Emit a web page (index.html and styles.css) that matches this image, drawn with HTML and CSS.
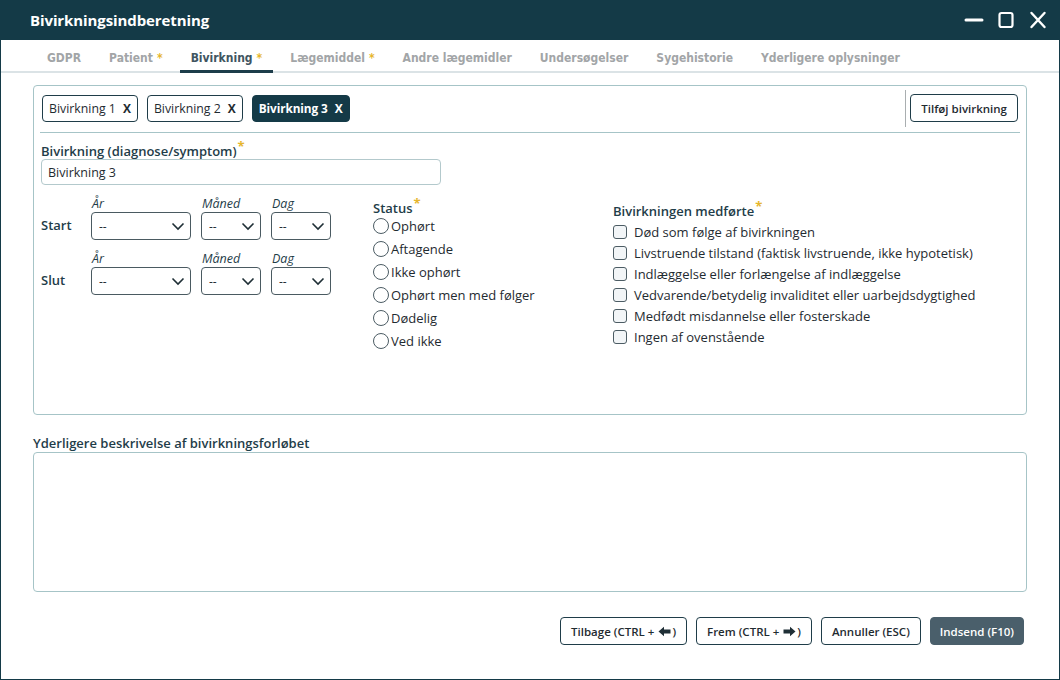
FILE: index.html
```html
<!DOCTYPE html>
<html lang="da">
<head>
<meta charset="utf-8">
<title>Bivirkningsindberetning</title>
<link rel="stylesheet" href="styles.css">
</head>
<body>
<div class="window">
  <header class="titlebar">
    <h1 class="title">Bivirkningsindberetning</h1>
    <div class="controls">
      <svg class="ctl" width="20" height="20" viewBox="0 0 20 20"><line x1="2" y1="10" x2="18" y2="10" stroke="#fff" stroke-width="3" stroke-linecap="round"/></svg>
      <svg class="ctl" width="20" height="20" viewBox="0 0 20 20"><rect x="3.5" y="3" width="13" height="14" rx="2" fill="none" stroke="#fff" stroke-width="2.2"/></svg>
      <svg class="ctl" width="20" height="20" viewBox="0 0 20 20"><path d="M3.5 3 L16.5 17 M16.5 3 L3.5 17" stroke="#fff" stroke-width="2.4" stroke-linecap="round"/></svg>
    </div>
  </header>

  <nav class="tabs">
    <span class="tab">GDPR</span>
    <span class="tab">Patient <i class="star">*</i></span>
    <span class="tab active">Bivirkning <i class="star">*</i></span>
    <span class="tab">Lægemiddel <i class="star">*</i></span>
    <span class="tab">Andre lægemidler</span>
    <span class="tab">Undersøgelser</span>
    <span class="tab">Sygehistorie</span>
    <span class="tab">Yderligere oplysninger</span>
  </nav>

  <main class="content">
    <section class="panel">
      <div class="chiprow">
        <div class="chips">
          <span class="chip">Bivirkning 1<b class="x">X</b></span>
          <span class="chip">Bivirkning 2<b class="x">X</b></span>
          <span class="chip selected">Bivirkning 3<b class="x">X</b></span>
        </div>
        <div class="vsep"></div>
        <button class="btn add">Tilføj bivirkning</button>
      </div>
      <div class="hsep"></div>

      <div class="form">
        <label class="lbl">Bivirkning (diagnose/symptom)<i class="star">*</i></label>
        <div class="input">Bivirkning 3</div>

        <div class="cols">
          <div class="dates">
            <div class="daterow">
              <span class="rowlbl">Start</span>
              <div class="field w100"><span class="sub">År</span><div class="select">--<svg width="14" height="10" viewBox="0 0 14 10"><path d="M1.5 2.5 L7 8 L12.5 2.5" fill="none" stroke="#1f2f36" stroke-width="1.6"/></svg></div></div>
              <div class="field w60"><span class="sub">Måned</span><div class="select">--<svg width="14" height="10" viewBox="0 0 14 10"><path d="M1.5 2.5 L7 8 L12.5 2.5" fill="none" stroke="#1f2f36" stroke-width="1.6"/></svg></div></div>
              <div class="field w60"><span class="sub">Dag</span><div class="select">--<svg width="14" height="10" viewBox="0 0 14 10"><path d="M1.5 2.5 L7 8 L12.5 2.5" fill="none" stroke="#1f2f36" stroke-width="1.6"/></svg></div></div>
            </div>
            <div class="daterow">
              <span class="rowlbl">Slut</span>
              <div class="field w100"><span class="sub">År</span><div class="select">--<svg width="14" height="10" viewBox="0 0 14 10"><path d="M1.5 2.5 L7 8 L12.5 2.5" fill="none" stroke="#1f2f36" stroke-width="1.6"/></svg></div></div>
              <div class="field w60"><span class="sub">Måned</span><div class="select">--<svg width="14" height="10" viewBox="0 0 14 10"><path d="M1.5 2.5 L7 8 L12.5 2.5" fill="none" stroke="#1f2f36" stroke-width="1.6"/></svg></div></div>
              <div class="field w60"><span class="sub">Dag</span><div class="select">--<svg width="14" height="10" viewBox="0 0 14 10"><path d="M1.5 2.5 L7 8 L12.5 2.5" fill="none" stroke="#1f2f36" stroke-width="1.6"/></svg></div></div>
            </div>
          </div>

          <div class="status">
            <div class="grouplbl">Status<i class="star">*</i></div>
            <div class="radio"><span class="circle"></span>Ophørt</div>
            <div class="radio"><span class="circle"></span>Aftagende</div>
            <div class="radio"><span class="circle"></span>Ikke ophørt</div>
            <div class="radio"><span class="circle"></span>Ophørt men med følger</div>
            <div class="radio"><span class="circle"></span>Dødelig</div>
            <div class="radio"><span class="circle"></span>Ved ikke</div>
          </div>

          <div class="outcome">
            <div class="grouplbl">Bivirkningen medførte<i class="star">*</i></div>
            <div class="check"><span class="box"></span>Død som følge af bivirkningen</div>
            <div class="check"><span class="box"></span>Livstruende tilstand (faktisk livstruende, ikke hypotetisk)</div>
            <div class="check"><span class="box"></span>Indlæggelse eller forlængelse af indlæggelse</div>
            <div class="check"><span class="box"></span>Vedvarende/betydelig invaliditet eller uarbejdsdygtighed</div>
            <div class="check"><span class="box"></span>Medfødt misdannelse eller fosterskade</div>
            <div class="check"><span class="box"></span>Ingen af ovenstående</div>
          </div>
        </div>
      </div>
    </section>

    <label class="lbl desc">Yderligere beskrivelse af bivirkningsforløbet</label>
    <div class="textarea"></div>
  </main>

  <footer class="footer">
    <button class="btn">Tilbage (CTRL +<svg class="arr" width="13" height="11" viewBox="0 0 13 11"><path d="M0.5 5.5 L6 0.8 L6 3.6 L12.5 3.6 L12.5 7.4 L6 7.4 L6 10.2 Z" fill="#1f2f36"/></svg>)</button>
    <button class="btn">Frem (CTRL +<svg class="arr" width="13" height="11" viewBox="0 0 13 11"><path d="M12.5 5.5 L7 0.8 L7 3.6 L0.5 3.6 L0.5 7.4 L7 7.4 L7 10.2 Z" fill="#1f2f36"/></svg>)</button>
    <button class="btn">Annuller (ESC)</button>
    <button class="btn primary">Indsend (F10)</button>
  </footer>
</div>
</body>
</html>
```

FILE: styles.css
```css
* { box-sizing: border-box; }
html, body { margin: 0; padding: 0; background: #fff; }
body {
  font-family: "Open Sans", "Noto Sans", "DejaVu Sans", sans-serif;
  font-size: 12px;
  color: #1f2b31;
}
.window {
  width: 1060px;
  height: 680px;
  border: 1px solid #143a47;
  display: flex;
  flex-direction: column;
  background: #fff;
}
.titlebar {
  height: 40px;
  background: #143a47;
  display: flex;
  align-items: center;
  justify-content: space-between;
  padding: 0 12px 0 30px;
  margin: -1px -1px 0 -1px;
}
.title {
  margin: 0;
  color: #fff;
  font-size: 15px;
  font-weight: 700;
  letter-spacing: -0.1px;
}
.controls { display: flex; gap: 12px; align-items: center; }
.ctl { display: block; }

.tabs {
  height: 33px;
  display: flex;
  align-items: stretch;
  padding-left: 35px;
  gap: 6px;
  border-bottom: 2px solid #dbe3e6;
}
.tab {
  display: flex;
  align-items: center;
  padding: 5px 11px 0;
  font-family: "DejaVu Sans Condensed", "Liberation Sans Narrow", "DejaVu Sans", sans-serif;
  font-stretch: condensed;
  font-weight: 700;
  font-size: 12px;
  color: #a2a5a7;
  margin-bottom: -2px;
  border-bottom: 3px solid transparent;
}
.tab.active { color: #3f5561; border-bottom-color: #1d3d4a; }
.tab .star { margin-left: 4px; }
.star { color: #e6b62d; font-style: normal; font-weight: 700; }
.lbl .star, .grouplbl .star { position: relative; top: -5px; margin-left: 1px; }

.content {
  flex: 1;
  padding: 12px 32px 0 32px;
  display: flex;
  flex-direction: column;
}
.panel {
  height: 330px;
  border: 1px solid #a6c4c7;
  border-radius: 4px;
  padding: 3px 6px 0 6px;
}
.chiprow {
  height: 38px;
  display: flex;
  align-items: center;
}
.chips { flex: 1; display: flex; gap: 9px; padding-left: 2px; }
.chip {
  height: 27px;
  display: inline-flex;
  align-items: center;
  padding: 0 6px 0 6px;
  border: 1px solid #1f3d49;
  border-radius: 4px;
  font-size: 12.3px;
  color: #1f2b31;
}
.chip .x { margin-left: 7px; font-weight: 700; font-size: 12px; }
.chip.selected { background: #143a47; color: #fff; font-weight: 700; border-color: #143a47; font-size: 11.8px; letter-spacing: -0.1px; }
.vsep { width: 1px; height: 37px; background: #a9aeb0; margin-right: 4px; }
.btn {
  height: 28px;
  border: 1px solid #1f3d49;
  border-radius: 4px;
  background: #fff;
  font-family: "Open Sans", "Noto Sans", sans-serif;
  font-weight: 600;
  font-size: 11.5px;
  color: #1f2b31;
  padding: 0 9px;
  display: inline-flex;
  align-items: center;
}
.btn.add { margin-right: 2px; padding: 0 10px; }
.hsep { height: 1px; background: #a6c4c7; margin: 5px 0 0 0; }

.form { padding: 9px 1px 0; }
.lbl {
  display: block;
  font-weight: 600;
  font-size: 13px;
  color: #1f3d49;
  line-height: 18px;
}
.input {
  width: 400px;
  height: 26px;
  border: 1px solid #b3c9cc;
  border-radius: 4px;
  padding: 0 6px;
  display: flex;
  align-items: center;
  font-size: 12.5px;
  margin-top: -1px;
}
.cols { display: flex; margin-top: 0; }
.dates { width: 332px; display: flex; flex-direction: column; }
.daterow { display: flex; align-items: flex-end; gap: 10px; height: 55px; }
.rowlbl { width: 40px; font-weight: 600; font-size: 13px; color: #1f3d49; padding-bottom: 6px; }
.field { display: flex; flex-direction: column; }
.w100 { width: 100px; }
.w60 { width: 60px; }
.sub { font-style: italic; font-size: 12.5px; color: #1f3d49; line-height: 16px; padding-left: 1px; }
.select {
  height: 28px;
  border: 1px solid #4a5a61;
  border-radius: 4px;
  display: flex;
  align-items: center;
  justify-content: space-between;
  padding: 0 5px 0 7px;
  font-size: 12px;
}
.select svg { display: block; }

.status { width: 240px; padding-top: 14px; }
.grouplbl { font-weight: 600; font-size: 13px; color: #1f3d49; line-height: 18px; }
.radio { display: flex; align-items: center; height: 23px; font-size: 13px; }
.status .grouplbl { margin-bottom: -3px; }
.circle {
  width: 16px; height: 16px;
  border: 1.5px solid #4c5c64;
  border-radius: 50%;
  margin-right: 2px;
  background: #fff;
}
.outcome { padding-top: 17px; }
.outcome .grouplbl { margin-bottom: 1px; }
.check { display: flex; align-items: center; height: 21px; font-size: 13px; }
.box {
  width: 14px; height: 14px;
  border: 1.5px solid #4c5c64;
  border-radius: 3px;
  background: #f2f5f7;
  margin-right: 7px;
}

.desc { margin-top: 19px; line-height: 18px; }
.textarea {
  height: 140px;
  border: 1px solid #a6c4c7;
  border-radius: 4px;
}

.footer {
  display: flex;
  justify-content: flex-end;
  gap: 9px;
  padding: 0 35px 34px 0;
}
.footer .btn { padding: 0 10px; }
.arr { display: block; margin: 0 1px 0 4px; }
.btn.primary { background: #4a5f6b; border-color: #4a5f6b; color: #fff; padding: 0 9px; }
```
